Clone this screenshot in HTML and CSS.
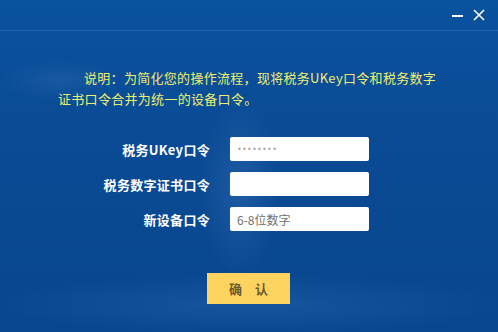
FILE: index.html
```html
<!DOCTYPE html>
<html lang="zh-CN">
<head>
<meta charset="utf-8">
<title>设备口令</title>
<link rel="stylesheet" href="styles.css">
</head>
<body>
<div class="dialog">
  <div class="titlebar">
    <span class="btn-min" aria-label="最小化"></span>
    <svg class="btn-close" width="12" height="12" viewBox="0 0 12 12" aria-label="关闭"><path d="M1 1 L11 11 M11 1 L1 11" stroke="#fff" stroke-width="1.6" fill="none"/></svg>
  </div>
  <p class="notice">说明：为简化您的操作流程，现将税务UKey口令和税务数字证书口令合并为统一的设备口令。</p>
  <div class="form">
    <label class="label">税务UKey口令</label>
    <div class="input"><span class="dots">••••••••</span></div>
    <label class="label">税务数字证书口令</label>
    <div class="input"></div>
    <label class="label">新设备口令</label>
    <div class="input"><span class="placeholder">6-8位数字</span></div>
  </div>
  <div class="actions">
    <button class="confirm">确　认</button>
  </div>
</div>
</body>
</html>
```
FILE: styles.css
```css
html, body {
  margin: 0;
  padding: 0;
}
body {
  width: 498px;
  height: 332px;
  overflow: hidden;
  font-family: "Noto Sans CJK SC", "Microsoft YaHei", sans-serif;
}
.dialog {
  width: 498px;
  height: 332px;
  box-sizing: border-box;
  background:
    radial-gradient(ellipse 40px 90px at 240px 190px, rgba(120,170,230,0.18), transparent),
    radial-gradient(ellipse 60px 20px at 60px 80px, rgba(120,170,230,0.12), transparent),
    radial-gradient(ellipse 260px 30px at 250px 305px, rgba(90,150,225,0.18), transparent),
    linear-gradient(180deg, #0a529e 0%, #0a4b95 40%, #08478f 100%);
  display: flex;
  flex-direction: column;
}
.titlebar {
  height: 30px;
  border-bottom: 1px solid rgba(140,180,235,0.22);
  display: flex;
  align-items: center;
  justify-content: flex-end;
  padding-right: 13px;
  gap: 10px;
  flex-shrink: 0;
}
.btn-min {
  display: block;
  width: 11px;
  height: 2px;
  background: #fff;
  margin-top: 1px;
}
.btn-close {
  display: block;
}
.notice {
  margin: 36px 0 0 58px;
  width: 384px;
  font-size: 13px;
  line-height: 21px;
  letter-spacing: 0.3px;
  color: #eeee6e;
  text-indent: 26px;
}
.form {
  margin: 28px 0 0 58px;
  display: grid;
  grid-template-columns: 152px 139px;
  column-gap: 20px;
  row-gap: 11px;
  align-items: center;
}
.label {
  text-align: right;
  color: #fff;
  font-weight: bold;
  font-size: 13px;
  letter-spacing: 0.3px;
}
.input {
  height: 24px;
  background: #fff;
  border-radius: 2px;
  display: flex;
  align-items: center;
  padding-left: 7px;
  font-size: 12px;
}
.dots {
  color: #aaaaaa;
  font-family: "DejaVu Sans", sans-serif;
  font-size: 8px;
  letter-spacing: 0.3px;
}
.placeholder {
  color: #6f6f6f;
}
.actions {
  margin-top: 42px;
  display: flex;
  justify-content: center;
}
.confirm {
  width: 83px;
  height: 31px;
  border: none;
  background: #fdd360;
  color: #6b5a2c;
  font-family: "Noto Sans CJK SC", sans-serif;
  font-weight: bold;
  font-size: 13px;
  padding: 0;
  margin-left: -1px;
}
```
